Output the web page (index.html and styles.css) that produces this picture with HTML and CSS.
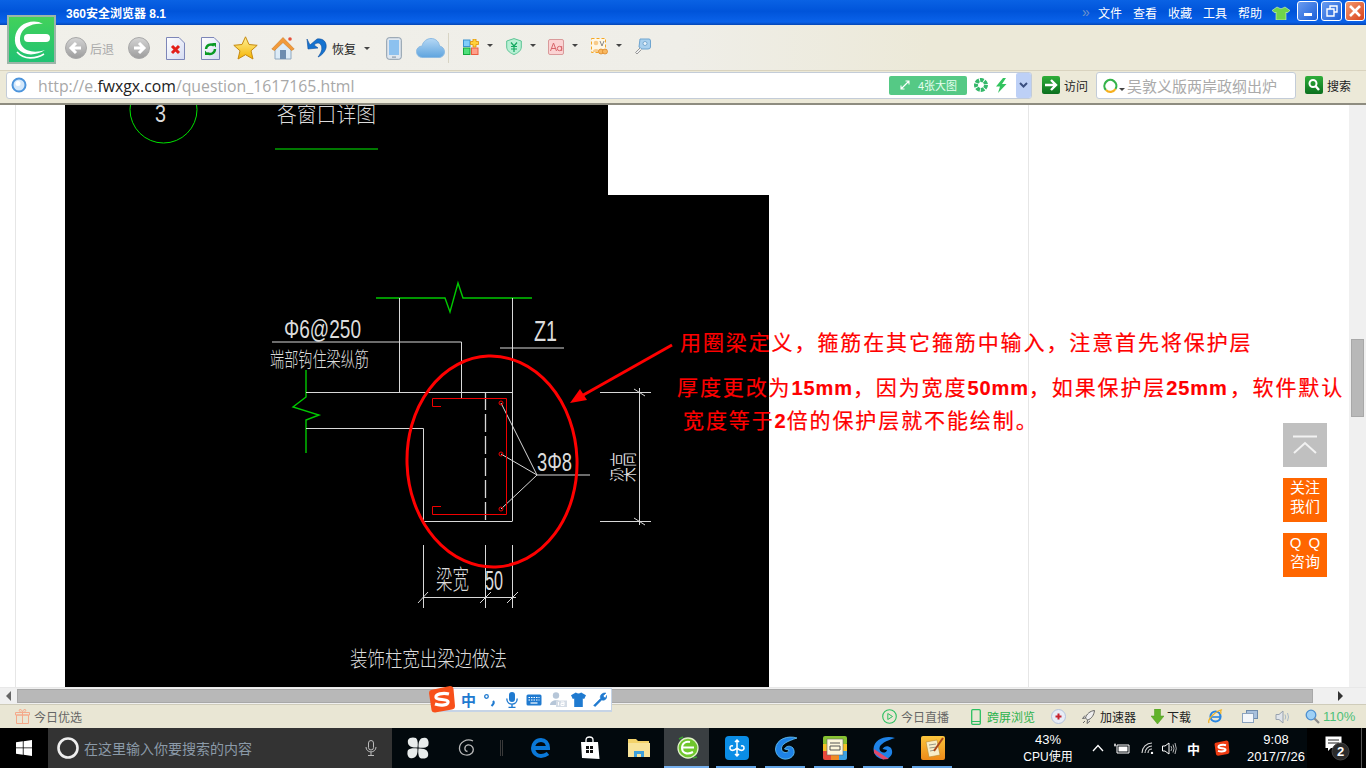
FILE: index.html
```html
<!DOCTYPE html>
<html lang="zh-CN">
<head>
<meta charset="utf-8">
<title>360安全浏览器 8.1</title>
<link rel="stylesheet" href="styles.css">
</head>
<body>
<svg class="defs" width="0" height="0">
  <defs>
    <linearGradient id="gBtn" x1="0" y1="0" x2="0" y2="1"><stop offset="0" stop-color="#d4d4d4"/><stop offset="1" stop-color="#9c9c9c"/></linearGradient>
    <linearGradient id="gStar" x1="0" y1="0" x2="0" y2="1"><stop offset="0" stop-color="#fff29a"/><stop offset="1" stop-color="#f5b400"/></linearGradient>
    <linearGradient id="gDoc" x1="0" y1="0" x2="1" y2="1"><stop offset="0" stop-color="#ffffff"/><stop offset="1" stop-color="#d5dcf2"/></linearGradient>
    <linearGradient id="gGreen" x1="0" y1="0" x2="0" y2="1"><stop offset="0" stop-color="#2fae3a"/><stop offset="1" stop-color="#0b6f1e"/></linearGradient>
    <linearGradient id="gLogo" x1="0" y1="0" x2="0" y2="1"><stop offset="0" stop-color="#43d25a"/><stop offset="1" stop-color="#1fc274"/></linearGradient>
    <linearGradient id="gCloud" x1="0" y1="0" x2="0" y2="1"><stop offset="0" stop-color="#b5d8f5"/><stop offset="1" stop-color="#5fa4de"/></linearGradient>
    <linearGradient id="gNote" x1="0" y1="0" x2="0" y2="1"><stop offset="0" stop-color="#fbc53c"/><stop offset="1" stop-color="#ee8a18"/></linearGradient>
  </defs>
</svg>

<header class="titlebar">
  <span class="title">360安全浏览器 8.1</span>
  <span class="more">»</span>
  <nav class="menu"><span>文件</span><span>查看</span><span>收藏</span><span>工具</span><span>帮助</span></nav>
  <svg class="shirt" width="18" height="14" viewBox="0 0 18 14"><path d="M5 1 L7 2 Q9 3.500 11 2 L13 1 L18 4.500 L15 7 L14 6 V14 H4 V6 L3 7 L0 4.500 Z" fill="#6fd44a" stroke="#d6f5c8" stroke-width=".6"/></svg>
  <span class="winbtn win-min"><i></i></span>
  <span class="winbtn win-max"><svg width="12" height="12" viewBox="0 0 12 12"><path d="M4 3.500 V1 H11 V7 H8.500 M1 4 H8 V11 H1 Z" fill="none" stroke="#fff" stroke-width="1.400"/></svg></span>
  <span class="winbtn win-close"><svg width="12" height="12" viewBox="0 0 12 12"><path d="M1 1 L11 11 M11 1 L1 11" stroke="#fff" stroke-width="2.600"/></svg></span>
</header>

<svg class="logo" width="49" height="49" viewBox="0 0 49 49">
  <rect x="1" y="1" width="47" height="47" fill="url(#gLogo)" stroke="#9cb5a8" stroke-width="2"/>
  <path d="M36 9 C30 5 20 6 14 11 C7 17 6 28 11 34 C17 41 29 41 38 35 C29 38 19 37 15 31 C11 25 13 16 20 12 C25 9 31 8 36 9 Z" fill="#fff"/>
  <path d="M21 23 H39" stroke="#fff" stroke-width="8" stroke-linecap="round"/>
  <path d="M10 37 C17 45 29 44 37 39" fill="none" stroke="#fff" stroke-width="1.600"/>
</svg>

<div class="toolbar">
  <svg class="t-back" width="22" height="22" viewBox="0 0 22 22"><circle cx="11" cy="11" r="10.500" fill="url(#gBtn)" stroke="#a8a8a8"/><path d="M16 11 H7 M11 6 L6 11 L11 16" fill="none" stroke="#fff" stroke-width="3"/></svg>
  <span class="t-label t-backlabel">后退</span>
  <svg class="t-fwd" width="22" height="22" viewBox="0 0 22 22"><circle cx="11" cy="11" r="10.500" fill="url(#gBtn)" stroke="#a8a8a8"/><path d="M6 11 H15 M11 6 L16 11 L11 16" fill="none" stroke="#fff" stroke-width="3"/></svg>
  <svg class="t-stop" width="19" height="23" viewBox="0 0 19 23"><path d="M.5 .5 H13 L18.500 6 V22.500 H.5 Z" fill="url(#gDoc)" stroke="#7d86b8"/><path d="M6 9 L13 16 M13 9 L6 16" stroke="#e3201b" stroke-width="3"/></svg>
  <svg class="t-reload" width="19" height="23" viewBox="0 0 19 23"><path d="M.5 .5 H13 L18.500 6 V22.500 H.5 Z" fill="url(#gDoc)" stroke="#7d86b8"/><path d="M5 12 A5 5 0 0 1 13 8.500 M14 12 A5 5 0 0 1 6 16" fill="none" stroke="#0a9a25" stroke-width="2.400"/><path d="M11 6 H15 V10.500 Z M8 18 H4 V13.500 Z" fill="#0a9a25"/></svg>
  <svg class="t-star" width="25" height="24" viewBox="0 0 25 24"><path d="M12.500 .8 L16 8.500 L24.200 9.300 L18 14.800 L20 23 L12.500 18.700 L5 23 L7 14.800 L.8 9.300 L9 8.500 Z" fill="url(#gStar)" stroke="#c68a10"/></svg>
  <svg class="t-home" width="24" height="24" viewBox="0 0 24 24"><path d="M4 12 V23 H20 V12 L12 5 Z" fill="#dcebf7" stroke="#8fa8c0"/><path d="M.8 13 L12 1.500 L23.200 13 L20.500 14.500 L12 6.500 L3.500 14.500 Z" fill="#f29a3a" stroke="#cc7a20" stroke-width=".6"/><rect x="9" y="14" width="6" height="9" fill="#6d8db0"/><circle cx="19" cy="3" r="1.800" fill="#e5503a"/></svg>
  <svg class="t-undo" width="22" height="22" viewBox="0 0 22 22"><path d="M4 9 L11 3 C18 2 21 7 20 12 C19 16 15 20 12 21 C15 17 17 13 15 9 C13 6 10 7 8 9 L12 12 L2 13 L1 3 Z" fill="#1573d0" stroke="#0d4e9c" stroke-width=".6"/></svg>
  <span class="t-label t-undolabel">恢复</span>
  <i class="caret t-undocaret"></i>
  <svg class="t-phone" width="16" height="23" viewBox="0 0 16 23"><rect x=".7" y=".7" width="14.600" height="21.600" rx="2.500" fill="#dfe7ef" stroke="#8b9bab"/><rect x="3" y="3" width="10" height="15" fill="#8cc1ef"/><rect x="6" y="19.500" width="4" height="1.200" fill="#8b9bab"/></svg>
  <svg class="t-cloud" width="29" height="20" viewBox="0 0 29 20"><path d="M7 19.500 C2 19.500 .5 16 .5 13.500 C.5 10 3.500 8 6 8.200 C7 3 11.500 .5 15 .5 C20 .5 23 4 23.500 8 C26.500 8.500 28.500 11 28.500 14 C28.500 17 26 19.500 23 19.500 Z" fill="url(#gCloud)" stroke="#8dbbe2"/></svg>
  <i class="t-sep"></i>
  <svg class="t-apps" width="16" height="16" viewBox="0 0 16 16"><rect x=".5" y="1" width="6.500" height="6.500" fill="#7fcdfb" stroke="#3d93d0"/><rect x=".5" y="9" width="6.500" height="6.500" fill="#4fe07a" stroke="#14a83d"/><rect x="8.500" y="9" width="6.500" height="6.500" fill="#ff9f8a" stroke="#ea5c40"/><path d="M10 0 H13 V2.500 H15.500 V5.500 H13 V8 H10 V5.500 H7.500 V2.500 H10 Z" fill="#ffd23c" stroke="#e08f00" stroke-width=".8"/></svg>
  <i class="caret t-c1"></i>
  <svg class="t-shield" width="16" height="17" viewBox="0 0 16 17"><path d="M8 .6 L15.300 3 V9 C15.300 13 11 15.500 8 16.500 C5 15.500 .7 13 .7 9 V3 Z" fill="#b8f0d4" stroke="#5cc494"/><path d="M5 4.500 L8 8 L11 4.500 M5 8.500 H11 M5 11 H11 M8 8 V14" fill="none" stroke="#13a860" stroke-width="1.200"/></svg>
  <i class="caret t-c2"></i>
  <svg class="t-font" width="16" height="16" viewBox="0 0 16 16"><rect x=".5" y=".5" width="15" height="15" rx="1.500" fill="#fbd3d3" stroke="#d99a9a"/><path d="M2.500 12 L5.500 4 L8.500 12 M3.500 9.500 H7.500" fill="none" stroke="#d8656a" stroke-width="1"/><circle cx="11.500" cy="9.500" r="2.200" fill="none" stroke="#d8656a"/><path d="M13.700 7 V12" stroke="#d8656a"/></svg>
  <i class="caret t-c3"></i>
  <svg class="t-shot" width="17" height="17" viewBox="0 0 17 17"><rect x=".5" y=".5" width="14" height="14" fill="#fff7e5" stroke="#f5a623" stroke-dasharray="3 2"/><circle cx="5" cy="5" r="2.300" fill="#f8cb8a"/><path d="M1.500 14 C2 10 8 10 9 14 Z" fill="#f8cb8a"/><path d="M9 3 L11 8 L13 3" fill="none" stroke="#888"/><circle cx="10" cy="13.500" r="2.500" fill="#f9b860" stroke="#d8801c" stroke-width=".7"/><circle cx="14" cy="13.500" r="2.500" fill="#f9b860" stroke="#d8801c" stroke-width=".7"/></svg>
  <i class="caret t-c4"></i>
  <svg class="t-key" width="17" height="17" viewBox="0 0 17 17"><path d="M6 1 H15 Q16.500 1 16.500 3 V9 Q16.500 11 14 11 H8 L5 9 Z" fill="#a9d0ee" stroke="#6fa5d0"/><circle cx="11" cy="5.500" r="2" fill="#eaf4fc" stroke="#5b93c0" stroke-width=".7"/><path d="M6 10 L1.500 14.500 L3 16 L7.500 11.500" fill="#eee" stroke="#999"/></svg>
</div>

<div class="addressrow">
  <div class="urlbox">
    <svg class="globe" width="16" height="16" viewBox="0 0 16 16"><circle cx="8" cy="8" r="6.500" fill="#d4e8fb" stroke="#4c94dc" stroke-width="2"/><circle cx="7" cy="6.500" r="2.500" fill="#fff"/></svg>
    <span class="url">http://e.<b>fwxgx.com</b>/question_1617165.html</span>
    <span class="bigpic">
      <svg width="10" height="10" viewBox="0 0 10 10"><path d="M1 9 L9 1 M5.500 1 H9 V4.500 M1 5.500 V9 H4.500" fill="none" stroke="#fff" stroke-width="1.100"/></svg>
      4张大图
    </span>
    <svg class="aperture" width="14" height="14" viewBox="0 0 14 14"><circle cx="7" cy="7" r="5" fill="none" stroke="#34b86a" stroke-width="4" stroke-dasharray="3.500 .9"/></svg>
    <svg class="bolt" width="12" height="15" viewBox="0 0 12 15"><path d="M8 0 L1 8.500 H5 L3 15 L11.500 6 H7 L11 0 Z" fill="#32c35e"/></svg>
    <span class="urldrop"><svg width="9" height="6" viewBox="0 0 9 6"><path d="M1 1 L4.500 4.500 L8 1" fill="none" stroke="#3a4f80" stroke-width="2"/></svg></span>
  </div>
  <svg class="go" width="18" height="18" viewBox="0 0 18 18"><rect width="18" height="18" rx="2" fill="url(#gGreen)"/><path d="M3 9 H13 M9 4 L14 9 L9 14" fill="none" stroke="#fff" stroke-width="2.400"/></svg>
  <span class="golabel">访问</span>
  <div class="searchbox">
    <svg class="so" width="15" height="15" viewBox="0 0 15 15"><path d="M3 12 A6 6 0 1 1 12.500 11" fill="none" stroke="#35b34a" stroke-width="2.200"/><path d="M3 12 A6 6 0 0 0 12.500 11" fill="none" stroke="#f6b01e" stroke-width="2.200"/></svg>
    <i class="caret socaret"></i>
    <span class="placeholder">吴敦义版两岸政纲出炉</span>
  </div>
  <svg class="searchgo" width="18" height="18" viewBox="0 0 18 18"><rect width="18" height="18" rx="2" fill="url(#gGreen)"/><circle cx="8" cy="7.500" r="3.500" fill="none" stroke="#fff" stroke-width="2"/><path d="M10.500 10 L14 14" stroke="#fff" stroke-width="2.400"/></svg>
  <span class="golabel searchlabel">搜索</span>
</div>

<main class="page">
  <div class="article">
    <svg class="drawing" width="704" height="583" viewBox="65 105 704 583">
      <path d="M65 105 H608 V195 H769 V688 H65 Z" fill="#000"/>
      <!-- green -->
      <g fill="none" stroke="#00c800" stroke-width="1">
        <circle cx="163.500" cy="109.500" r="33.500" stroke="#00e000"/>
        <path d="M275 149 H378" stroke="#00f000" stroke-width="1.200"/>
        <path d="M376 298 H445 L450 312 L458 283 L463 298 H532" stroke-width="1.400"/>
        <path d="M306 370 V397 L293 407 L319 415 L306 420 V453" stroke-width="1.400"/>
      </g>
      <!-- white section lines -->
      <g fill="none" stroke="#d8d8d8" stroke-width="1">
        <path d="M399.500 298 V392 M512.500 298 V521.500 M272 342 H461.500 V398 M500 348 H564"/>
        <path d="M306 392.500 H512 M306 428.500 H423.500 V521.500 H512"/>
        <path d="M485.500 392 V521" stroke-dasharray="18 4" stroke-width="1.300"/>
        <path d="M485.500 545 V608 M423.500 545 V608 M512.500 545 V608 M423 597.500 H516"/>
        <path d="M418 603 L428 592 M480 603 L491 592 M507 603 L518 592"/>
        <path d="M600 392.500 H651 M600 521.500 H651 M639.500 388 V525 M634 389 L645 396 M634 518 L645 525"/>
        <path d="M501 403 L537 475 M501 454 L537 475 M501 509 L537 475 M537 475 H590"/>
      </g>
      <!-- stirrup -->
      <g fill="none" stroke="#f00000" stroke-width="1">
        <path d="M441 406.500 H432.500 V398.500 H506.500 V514.500 H432.500 V506.500 H441"/>
        <circle cx="501" cy="403" r="2"/>
        <circle cx="501" cy="454" r="2"/>
        <circle cx="501" cy="509" r="2"/>
      </g>
      <!-- drawing labels -->
      <g class="cad">
        <text x="155" y="122" textLength="11" lengthAdjust="spacingAndGlyphs" font-size="24">3</text>
        <text x="277" y="122" textLength="99" lengthAdjust="spacingAndGlyphs" font-size="22">各窗口详图</text>
        <text x="284" y="338" textLength="77" lengthAdjust="spacingAndGlyphs" font-size="25">Φ6@250</text>
        <text x="270" y="367" textLength="99" lengthAdjust="spacingAndGlyphs" font-size="20">端部钩住梁纵筋</text>
        <text x="534" y="341" textLength="23" lengthAdjust="spacingAndGlyphs" font-size="29">Z1</text>
        <text x="537" y="471" textLength="35" lengthAdjust="spacingAndGlyphs" font-size="26">3Φ8</text>
        <text x="436" y="589" textLength="33" lengthAdjust="spacingAndGlyphs" font-size="26">梁宽</text>
        <text x="485" y="590" textLength="18" lengthAdjust="spacingAndGlyphs" font-size="27">50</text>
        <text x="350" y="666" textLength="157" lengthAdjust="spacingAndGlyphs" font-size="21">装饰柱宽出梁边做法</text>
        <text transform="translate(634 482) rotate(-90)" x="0" y="0" textLength="30" lengthAdjust="spacingAndGlyphs" font-size="28">梁高</text>
      </g>
      <!-- markup -->
      <ellipse cx="492" cy="461.500" rx="85" ry="105.500" fill="none" stroke="#f00" stroke-width="3" transform="rotate(-2 492 461)"/>
      <path d="M672 345 L578 398" stroke="#f00" stroke-width="3"/>
      <path d="M570 403 L580 389 L587 400 Z" fill="#f00"/>
    </svg>
    <div class="note">
      <p class="note-1">用圈梁定义，箍筋在其它箍筋中输入，注意首先将保护层</p>
      <p class="note-2">厚度更改为<b>15mm</b>，因为宽度<b>50mm</b>，如果保护层<b>25mm</b>，软件默认</p>
      <p class="note-3">宽度等于<b>2</b>倍的保护层就不能绘制。</p>
    </div>
  </div>
  <div class="vscroll"><i class="vthumb"></i></div>
  <div class="float">
    <span class="totop"><svg width="26" height="20" viewBox="0 0 26 20"><path d="M1 1.500 H25 M2 18 L13 8 L24 18" fill="none" stroke="#f2f2f2" stroke-width="2"/></svg></span>
    <span class="fbtn">关注<br>我们</span>
    <span class="fbtn"><span class="qq">Q Q</span><br>咨询</span>
  </div>
</main>

<div class="hscroll">
  <i class="arrow-l"></i>
  <i class="hthumb"></i>
  <i class="arrow-r"></i>
</div>

<div class="imebar">
  <svg class="ime-s" width="28" height="28" viewBox="0 0 28 28"><path d="M3 5 L22 1 Q25 1 25.500 4 L27 21 Q27 24 24 24.500 L7 27.500 Q4 27.500 3.500 25 L1 8 Q1 5.500 3 5 Z" fill="#f8501a"/><path d="M21 9 C15 7.500 7 9 8 12.500 C9 15.500 19 13.500 20 16.500 C21 20 13 21 7 19" fill="none" stroke="#fff" stroke-width="3.200"/></svg>
  <span class="ime-zh">中</span>
  <svg class="ime-punc" width="12" height="14" viewBox="0 0 12 14"><circle cx="2.500" cy="3.500" r="1.800" fill="none" stroke="#1f7ad0" stroke-width="1.300"/><path d="M9 8 Q11 10 7.500 13" fill="none" stroke="#1f7ad0" stroke-width="2.200"/></svg>
  <svg class="ime-mic" width="12" height="16" viewBox="0 0 12 16"><rect x="3" y="0" width="6" height="10" rx="3" fill="#1f7ad0"/><path d="M.8 6.500 C.8 14 11.200 14 11.200 6.500 M6 12 V15.500 M2.500 15.500 H9.500" fill="none" stroke="#1f7ad0" stroke-width="1.400"/></svg>
  <svg class="ime-kb" width="16" height="12" viewBox="0 0 16 12"><rect x=".5" y=".5" width="15" height="11" rx="1.500" fill="#1f7ad0"/><path d="M2.500 3.500 H13.500 M2.500 6 H13.500" stroke="#fff" stroke-width="1.200" stroke-dasharray="1.500 1"/><path d="M4.500 9 H11.500" stroke="#fff" stroke-width="1.200"/></svg>
  <svg class="ime-user" width="17" height="15" viewBox="0 0 17 15"><circle cx="6" cy="3.500" r="3.200" fill="#b6c6d8"/><path d="M0 13 C0 6.500 12 6.500 12 13 Z" fill="#b6c6d8"/><rect x="6" y="8.500" width="11" height="6.500" fill="#d4dce6"/><path d="M8.500 10 V13.500 M11 10 H14 V13.500 H11 V11.500 H14" fill="none" stroke="#fff" stroke-width="1"/></svg>
  <svg class="ime-shirt" width="15" height="15" viewBox="0 0 14 14"><path d="M4.500 .5 Q7 2.500 9.500 .5 L14 3 L12.300 6.500 L11 6 V14 H3 V6 L1.700 6.500 L0 3 Z" fill="#1f7ad0"/></svg>
  <svg class="ime-wrench" width="15" height="15" viewBox="0 0 14 14"><path d="M1.500 12.500 L8 6 C7 3 9.500 .5 13 1 L10.500 3.500 L11 5 L12.500 5.500 L14 3 C14 7 11.500 8 9 7.500 L3 13.500 Z" fill="#1f7ad0" stroke="#1f7ad0" stroke-width=".6"/></svg>
</div>

<div class="statusbar">
  <svg class="s-gift" width="15" height="15" viewBox="0 0 15 15"><path d="M1.500 6 H13.500 V14.500 H1.500 Z M.5 3.500 H14.500 V6 H.5 Z M7.500 3.500 V14.500 M7.500 3.500 C4 3.500 3.500 .5 5 .5 C6.500 .5 7.500 2 7.500 3.500 C7.500 2 8.500 .5 10 .5 C11.500 .5 11 3.500 7.500 3.500" fill="none" stroke="#f4a98a"/></svg>
  <span class="s-text s-today">今日优选</span>
  <svg class="s-play" width="15" height="15" viewBox="0 0 15 15"><circle cx="7.500" cy="7.500" r="6.800" fill="none" stroke="#2cbf62" stroke-width="1.100"/><path d="M5.800 4.500 L10.500 7.500 L5.800 10.500 Z" fill="none" stroke="#2cbf62"/></svg>
  <span class="s-text s-live">今日直播</span>
  <svg class="s-phone" width="10" height="16" viewBox="0 0 10 16"><rect x=".7" y=".7" width="8.600" height="14.600" rx="1" fill="none" stroke="#2cbf62" stroke-width="1.300"/><path d="M1 12.500 H9" stroke="#2cbf62"/></svg>
  <span class="s-text s-green s-cross">跨屏浏览</span>
  <svg class="s-plus" width="15" height="15" viewBox="0 0 15 15"><circle cx="7.500" cy="7.500" r="7" fill="#e7ecf6" stroke="#b4c2db"/><path d="M7.500 4.500 V10.500 M4.500 7.500 H10.500" stroke="#c8202c" stroke-width="2"/></svg>
  <svg class="s-rocket" width="13" height="14" viewBox="0 0 13 14"><path d="M12.500 .5 C8 1 4.500 4 3.500 8 L5.500 10 C9.500 9 12 5 12.500 .5 Z M3.500 8 L.5 8.500 L3 5.500 M5.500 10 L5 13.500 L8 11 M1 13 L3 11" fill="#eee" stroke="#666"/></svg>
  <span class="s-text s-dark s-boost">加速器</span>
  <svg class="s-down" width="13" height="15" viewBox="0 0 13 15"><path d="M3.500 0 H9.500 V7 H13 L6.500 15 L0 7 H3.500 Z" fill="#62b32a" stroke="#4a9520" stroke-width=".5"/></svg>
  <span class="s-text s-dark s-dl">下载</span>
  <svg class="s-ie" width="15" height="15" viewBox="0 0 15 15"><circle cx="7.500" cy="7.500" r="5" fill="none" stroke="#2a86e0" stroke-width="2.200"/><path d="M3 8 H12.500" stroke="#2a86e0" stroke-width="1.600"/><path d="M1 14 C-1 10 9 1 14 1 C11 0 14 3 12.500 5" fill="none" stroke="#f0b020" stroke-width="1.200"/></svg>
  <svg class="s-win" width="16" height="13" viewBox="0 0 16 13"><rect x="4.500" y=".5" width="11" height="8" fill="#a8c0dc" stroke="#6f8bab"/><rect x=".5" y="3.500" width="11" height="9" fill="#f4f7fb" stroke="#8ba3bf"/></svg>
  <svg class="s-vol" width="15" height="14" viewBox="0 0 15 14"><path d="M1 4.500 H4 L8 1 V13 L4 9.500 H1 Z" fill="#e0e4ea" stroke="#98a2ae"/><path d="M10 4.500 Q11.500 7 10 9.500 M12.500 3 Q14.500 7 12.500 11" fill="none" stroke="#a8b8c8"/></svg>
  <svg class="s-zoom" width="15" height="15" viewBox="0 0 15 15"><circle cx="6" cy="6" r="4.800" fill="#9ed0f5" stroke="#4c8fd0" stroke-width="1.300"/><path d="M9.500 9.500 L14 14" stroke="#8a8a8a" stroke-width="2.200"/></svg>
  <span class="s-pct">110%</span>
</div>

<footer class="taskbar">
  <div class="tk-start"><svg width="16" height="16" viewBox="0 0 16 16"><path d="M0 2.300 L6.800 1.300 V7.500 H0 Z M7.600 1.200 L16 0 V7.500 H7.600 Z M0 8.300 H6.800 V14.700 L0 13.700 Z M7.600 8.300 H16 V16 L7.600 14.800 Z" fill="#fff"/></svg></div>
  <div class="tk-search">
    <svg class="cortana" width="22" height="22" viewBox="0 0 22 22"><circle cx="11" cy="11" r="9.500" fill="none" stroke="#eee" stroke-width="2.600"/></svg>
    <span class="tk-hint">在这里输入你要搜索的内容</span>
    <svg class="tk-mic" width="12" height="16" viewBox="0 0 12 16"><rect x="3.500" y=".5" width="5" height="9.500" rx="2.500" fill="none" stroke="#bbb"/><path d="M1 7 C1 13.500 11 13.500 11 7 M6 12 V15.500 M3 15.500 H9" fill="none" stroke="#bbb"/></svg>
  </div>
  <div class="task"><svg width="22" height="22" viewBox="0 0 22 22"><g fill="#e8ecec"><path d="M10.500 10.500 C3 11 0 8 1 3 C2 0 7 0 9 1 C11 3 11 7 10.500 10.500 Z"/><path d="M11.500 10.500 C11 3 14 0 19 1 C22 2 22 7 21 9 C19 11 15 11 11.500 10.500 Z"/><path d="M11.500 11.500 C19 11 22 14 21 19 C20 22 15 22 13 21 C11 19 11 15 11.500 11.500 Z"/><path d="M10.500 11.500 C11 19 8 22 3 21 C0 20 0 15 1 13 C3 11 7 11 10.500 11.500 Z"/></g></svg></div>
  <div class="task"><svg width="20" height="20" viewBox="0 0 20 20"><path d="M16 3 C10 0 2 4 2.500 11 C3 17 11 19 15 15 C18 11 15 6 10.500 7 C7 8 7 13 10.500 13.500" fill="none" stroke="#b8b8b8" stroke-width="1.300"/></svg></div>
  <div class="tk-divider"></div>
  <div class="task"><svg width="20" height="20" viewBox="0 0 20 20"><path d="M2 10 H17 C17 5 14 2 10 2 C5 2 2 6 2 10 C2 15 6 18 10 18 C13 18 15 17 17 15.500" fill="none" stroke="#0a78d8" stroke-width="4"/></svg></div>
  <div class="task"><svg width="20" height="24" viewBox="0 0 20 24"><path d="M1 6 H18 L19.500 23 L2 22 Z" fill="#fff"/><path d="M6 7 V4 Q6 1 9.500 1 Q13 1 13 4 V7" fill="none" stroke="#fff" stroke-width="1.300"/><path d="M6 10 H9 V13 H6 Z M10 10 H13 V13 H10 Z M6 14 H9 V17 H6 Z M10 14 H13 V17 H10 Z" fill="#111"/></svg></div>
  <div class="task"><svg width="22" height="20" viewBox="0 0 22 20"><path d="M0 1 H8 L10 3 H21 V19 H0 Z" fill="#f3d26a"/><path d="M0 5 H22 V19 H0 Z" fill="#f8e39a"/><path d="M6 19 V13 H16 V19 H13 V16 H9 V19 Z" fill="#3ea0dc"/></svg></div>
  <div class="task on"><svg width="22" height="24" viewBox="0 0 22 24"><circle cx="11" cy="12" r="10" fill="#6fc62c" stroke="#dff2c8" stroke-width="1.300"/><path d="M17 11.500 H6 M5 12 C5 7 9 5 13 6 M5 12 C5 17 10 19 16 16" fill="none" stroke="#fff" stroke-width="2"/><path d="M2 3 L6 1 M16 22 L20 21" stroke="#3aa030" stroke-width="1.400"/></svg></div>
  <div class="task"><svg width="24" height="24" viewBox="0 0 24 24"><rect width="24" height="24" rx="4" fill="#0a8de6"/><path d="M12 4 V20 M8 10 C5 9 4 12 6 14 C8 15 10 14 12 12 C14 14 16 15 18 14 C20 12 19 9 16 10 M10 6 L12 4 L14 6 M10 18 L12 20 L14 18" fill="none" stroke="#fff" stroke-width="1.500"/></svg></div>
  <div class="task"><svg width="24" height="24" viewBox="0 0 24 24"><path d="M23 2 C14 -1 2 3 1.500 13 C1.500 20 8 24 13 23 C19 22 22 17 19 12 C16 9 12 10 10.500 13 L15 14 C14 18 8 17 7.500 13 C7 8 14 5 23 2 Z" fill="#1e82e6" stroke="#68c8f8" stroke-width=".8"/></svg></div>
  <div class="task"><svg width="24" height="24" viewBox="0 0 24 24"><rect width="24" height="9" rx="2" fill="#86c232"/><rect y="8" width="24" height="8" fill="#f5c226"/><path d="M0 15 H8 V24 H2 Q0 24 0 22 Z" fill="#e8483a"/><path d="M8 15 H16 V24 H8 Z" fill="#f08a24"/><path d="M16 15 H24 V22 Q24 24 22 24 H16 Z" fill="#3ca0e0"/><rect x="4" y="3" width="16" height="16" fill="#fdf6da" stroke="#666" stroke-width=".6"/><path d="M7 7 H17 M7 10 H17 V14 H7 Z" fill="none" stroke="#555"/></svg></div>
  <div class="task"><svg width="24" height="24" viewBox="0 0 24 24"><path d="M23 2 C14 -1 2 3 1.500 13 C1.500 20 8 24 13 23 C19 22 22 17 19 12 C16 9 12 10 10.500 13 L15 14 C14 18 8 17 7.500 13 C7 8 14 5 23 2 Z" fill="#1e82e6"/><path d="M2 13 L17 23 L11 23.500 L2 17 Z" fill="#e0486a"/></svg></div>
  <div class="task"><svg width="24" height="24" viewBox="0 0 24 24"><rect width="24" height="24" rx="2" fill="url(#gNote)"/><path d="M5 6 L16 4 L19 19 L8 21 Z" fill="#f7edc8" stroke="#b88a30" stroke-width=".6"/><path d="M8 9 L15 8 M8.500 12 L16 11 M9 15 L14 14" stroke="#998" /><path d="M22 2 L13 15" stroke="#a8461a" stroke-width="2"/></svg></div>
  <div class="tk-cpu"><span>43%</span><span class="tk-cpulabel">CPU使用</span></div>
  <svg class="tr-chev" width="12" height="8" viewBox="0 0 12 8"><path d="M1 7 L6 1.500 L11 7" fill="none" stroke="#fff" stroke-width="1.300"/></svg>
  <svg class="tr-batt" width="16" height="11" viewBox="0 0 16 11"><path d="M0 2 H2 M1 .5 V3.500" stroke="#fff"/><path d="M3 2 H15 V10 H3 Z" fill="none" stroke="#fff"/><rect x="4.500" y="3.500" width="9" height="5" fill="#fff"/></svg>
  <svg class="tr-wifi" width="13" height="12" viewBox="0 0 13 12"><path d="M1 11 A10 10 0 0 1 11 1 M4 11 A7 7 0 0 1 11 4 M7 11 A4 4 0 0 1 11 7" fill="none" stroke="#d8d8d8" stroke-width="1.100"/><circle cx="11" cy="11" r="1.200" fill="#fff"/></svg>
  <svg class="tr-vol" width="15" height="13" viewBox="0 0 15 13"><path d="M.5 4 H3 L7 1 V12 L3 9 H.5 Z" fill="none" stroke="#fff"/><path d="M9 4 Q10.500 6.500 9 9 M11 2.500 Q13 6.500 11 10.500 M13 1 Q15.500 6.500 13 12" fill="none" stroke="#ddd" stroke-width=".8"/></svg>
  <span class="tr-zh">中</span>
  <svg class="tr-s" width="16" height="16" viewBox="0 0 28 28"><path d="M3 5 L22 1 Q25 1 25.500 4 L27 21 Q27 24 24 24.500 L7 27.500 Q4 27.500 3.500 25 L1 8 Q1 5.500 3 5 Z" fill="#ee3b12"/><path d="M21 9 C15 7.500 7 9 8 12.500 C9 15.500 19 13.500 20 16.500 C21 20 13 21 7 19" fill="none" stroke="#fff" stroke-width="3.600"/></svg>
  <div class="tk-clock"><span>9:08</span><span>2017/7/26</span></div>
  <div class="tk-notify">
    <svg width="25" height="25" viewBox="0 0 25 25"><path d="M.5 .5 H16.500 V12 H6 L3 15 V12 H.5 Z" fill="#fff"/><path d="M3 4 H14 M3 7 H14" stroke="#222"/><circle cx="15.500" cy="15.500" r="8.500" fill="#2b2b2b" stroke="#444"/><text x="15.500" y="20" text-anchor="middle" font-size="13" font-weight="700" fill="#fff">2</text></svg>
  </div>
</footer>
</body>
</html>
```

FILE: styles.css
```css
html, body {padding: 0; margin: 0}
body {
  width: 1366px;
  height: 768px;
  overflow: hidden;
  position: relative;
  display: flex;
  flex-direction: column;
  font: 12px "Liberation Sans", "Noto Sans CJK SC", sans-serif;
  background: #fff;
}
.defs {position: absolute}
svg {display: block; flex: none}
i {display: block; flex: none}

/* title bar */
.titlebar {
  height: 25px;
  flex: none;
  display: flex;
  align-items: center;
  color: #fff;
  background: linear-gradient(#0a62e4 0, #0054da 45%, #0a62ea 88%, #0546b4 100%);
}
.title {margin-left: 66px; font-weight: bold; font-size: 12px; width: 1016px}
.more {color: #6f93c9; font-size: 14px; width: 16px; margin-top: -2px}
.menu {display: flex; gap: 11px; font-size: 12px}
.shirt {margin-left: 10px; margin-right: 7px}
.winbtn {
  width: 21px;
  height: 20px;
  box-sizing: border-box;
  margin-right: 3px;
  margin-top: -3px;
  display: flex;
  align-items: center;
  justify-content: center;
  border: 1px solid #fff;
  border-radius: 3px;
  background: linear-gradient(135deg, #6a9cf0, #1a5fd8);
}
.win-min i {width: 8px; height: 3px; background: #fff; margin-top: 7px}
.win-close {background: linear-gradient(135deg, #f29a70, #d9421c); margin-right: 0; width: 20px}

/* logo sits over both bars */
.logo {position: absolute; left: 7px; top: 15px}

/* toolbar */
.toolbar {
  height: 46px;
  flex: none;
  box-sizing: border-box;
  display: flex;
  align-items: center;
  background: linear-gradient(90deg, #f1f0ea 0, #efeee8 50%, #ece9d8 68%);
  border-bottom: 1px solid #d9d3bf;
  padding-top: 1px;
}
.t-label {color: #222; font-size: 12px}
.t-back {margin-left: 65px}
.t-backlabel {margin-left: 3px; color: #aaa}
.t-fwd {margin-left: 14px}
.t-stop {margin-left: 16px}
.t-reload {margin-left: 16px}
.t-star {margin-left: 13px}
.t-home {margin-left: 13px}
.t-undo {margin-left: 11px; margin-top: -3px}
.t-undolabel {margin-left: 4px}
.t-undocaret {margin-left: 8px}
.t-phone {margin-left: 16px}
.t-cloud {margin-left: 14px}
.t-sep {width: 1px; height: 30px; background: #d8d4c4; margin-left: 3px}
.t-apps {margin-left: 14px; margin-top: -3px}
.t-c1 {margin-left: 8px; margin-top: -5px}
.t-shield {margin-left: 13px; margin-top: -3px}
.t-c2 {margin-left: 8px; margin-top: -5px}
.t-font {margin-left: 12px; margin-top: -3px}
.t-c3 {margin-left: 8px; margin-top: -5px}
.t-shot {margin-left: 13px; margin-top: -3px}
.t-c4 {margin-left: 8px; margin-top: -5px}
.t-key {margin-left: 12px; margin-top: -3px}
.caret {
  width: 0;
  height: 0;
  border: 3px solid transparent;
  border-top: 3px solid #444;
  border-bottom: 0;
}

/* address row */
.addressrow {
  height: 34px;
  flex: none;
  box-sizing: border-box;
  display: flex;
  align-items: center;
  padding-bottom: 4px;
  background: #ece9d8;
  border-bottom: 2px solid #8e8c80;
}
.urlbox {
  width: 1026px;
  height: 27px;
  margin-left: 6px;
  box-sizing: border-box;
  display: flex;
  align-items: center;
  background: #fff;
  border: 1px solid #c3ccd8;
  border-radius: 3px;
}
.globe {margin-left: 4px}
.url {
  margin-left: 11px;
  margin-top: 1px;
  width: 842px;
  font: 15.800px "Open Sans", sans-serif;
  color: #a8a8a8;
  white-space: nowrap;
}
.url b {font-weight: normal; color: #222}
.bigpic {
  width: 78px;
  height: 19px;
  margin-left: 9px;
  display: flex;
  align-items: center;
  gap: 8px;
  padding-left: 11px;
  box-sizing: border-box;
  background: #55c985;
  border-radius: 2px;
  color: #e8fff0;
  font-size: 11px;
}
.aperture {margin-left: 7px}
.bolt {margin-left: 7px}
.urldrop {
  width: 15px;
  height: 25px;
  margin-left: 9px;
  display: flex;
  align-items: center;
  justify-content: center;
  background: #bdd0f6;
  border-radius: 2px;
}
.go {margin-left: 10px}
.golabel {margin-left: 4px; color: #222; font-size: 12px}
.searchbox {
  width: 200px;
  height: 27px;
  margin-left: 8px;
  box-sizing: border-box;
  display: flex;
  align-items: center;
  background: #fff;
  border: 1px solid #c3ccd8;
  border-radius: 3px;
}
.so {margin-left: 6px}
.socaret {margin-left: 1px; margin-top: 9px}
.placeholder {margin-left: 2px; color: #aaa; font-size: 15px; white-space: nowrap}
.searchgo {margin-left: 9px}

/* page */
.page {
  flex: 1;
  min-height: 0;
  display: flex;
  position: relative;
  overflow: hidden;
}
.article {
  width: 1015px;
  margin-left: 15px;
  padding-left: 49px;
  box-sizing: border-box;
  border-left: 1px solid #e6e6e6;
  border-right: 1px solid #e6e6e6;
}
.cad text {fill: #dcdcdc; font-weight: 300}
.note {
  position: absolute;
  left: 680px;
  top: 0;
  color: #f00;
  font-size: 21px;
  letter-spacing: 1.900px;
  -webkit-text-stroke: .2px #f00;
  white-space: nowrap;
}
.note p {margin: 0; line-height: 28px}
.note b {font-family: "Liberation Sans", sans-serif; font-size: 20px; letter-spacing: .9px}
.note .note-1 {margin-top: 224px}
.note .note-2 {margin-top: 17px; margin-left: -3px}
.note .note-3 {margin-top: 5px; margin-left: 3px}
.note-2 b:last-child {margin-right: 2px}
.vscroll {
  width: 17px;
  margin-left: 320px;
  flex: none;
  background: #f0f0f0;
  position: relative;
}
.vthumb {
  position: absolute;
  left: 2px;
  top: 234px;
  width: 13px;
  height: 78px;
  box-sizing: border-box;
  background: #b8b8b8;
  border: 1px solid #a8a8a8;
}
.float {
  position: absolute;
  left: 1283px;
  top: 318px;
  display: flex;
  flex-direction: column;
  gap: 11px;
}
.totop, .fbtn {
  width: 44px;
  height: 44px;
  display: flex;
  align-items: center;
  justify-content: center;
}
.totop {background: #c0c0c0}
.fbtn {
  display: block;
  box-sizing: border-box;
  padding-top: 1px;
  background: #ff6600;
  color: #fff;
  font-size: 15px;
  line-height: 18.500px;
  text-align: center;
}
.qq {word-spacing: 3px}

/* bottom scrollbar */
.hscroll {
  height: 17px;
  flex: none;
  display: flex;
  align-items: center;
  box-sizing: border-box;
  background: #f0f0f0;
  border-top: 1px solid #e8e8e8;
}
.arrow-l {
  margin-left: 6px;
  border: 5px solid transparent;
  border-right: 5px solid #666;
  border-left: 0;
}
.hthumb {
  width: 1296px;
  height: 14px;
  margin-left: 6px;
  box-sizing: border-box;
  background: #b8b8b8;
  border: 1px solid #a8a8a8;
}
.arrow-r {
  margin-left: 25px;
  border: 5px solid transparent;
  border-left: 5px solid #333;
  border-right: 0;
}

/* input method bar floats over the scrollbar */
.imebar {
  position: absolute;
  left: 440px;
  top: 688px;
  width: 172px;
  height: 24px;
  box-sizing: border-box;
  display: flex;
  align-items: center;
  background: #fff;
  border: 1px solid #c6d4e6;
  border-bottom-width: 2px;
}
.ime-s {position: absolute; left: -13px; top: -4px}
.ime-zh {margin-left: 20px; color: #1f7ad0; font-size: 15px; font-weight: bold}
.ime-punc {margin-left: 8px}
.ime-mic {margin-left: 10px}
.ime-kb {margin-left: 8px}
.ime-user {margin-left: 8px}
.ime-shirt {margin-left: 4px}
.ime-wrench {margin-left: 6px}

/* status bar */
.statusbar {
  height: 24px;
  flex: none;
  box-sizing: border-box;
  display: flex;
  align-items: center;
  background: #e9e6d4;
  border-top: 1px solid #cfccba;
}
.s-text {font-size: 12px; color: #666; white-space: nowrap}
.s-dark {color: #222}
.s-green {color: #2bb24c}
.s-gift {margin-left: 15px}
.s-today {margin-left: 4px}
.s-play {margin-left: 800px}
.s-live {margin-left: 4px}
.s-phone {margin-left: 22px}
.s-cross {margin-left: 6px}
.s-plus {margin-left: 16px}
.s-rocket {margin-left: 16px}
.s-boost {margin-left: 5px}
.s-down {margin-left: 15px}
.s-dl {margin-left: 3px}
.s-ie {margin-left: 17px}
.s-win {margin-left: 19px}
.s-vol {margin-left: 17px}
.s-zoom {margin-left: 15px}
.s-pct {margin-left: 3px; color: #4cc078; font-size: 13px}

/* task bar */
.taskbar {
  height: 40px;
  flex: none;
  display: flex;
  align-items: center;
  color: #fff;
  background: #02090d;
}
.tk-start {
  width: 48px;
  height: 40px;
  display: flex;
  align-items: center;
  justify-content: center;
  background: #000;
}
.tk-search {
  width: 344px;
  height: 40px;
  margin-right: 1px;
  display: flex;
  align-items: center;
  background: #333;
}
.cortana {margin-left: 9px}
.tk-hint {margin-left: 5px; width: 281px; color: #8b9aa8; font-size: 14px; white-space: nowrap}
.task {
  width: 49px;
  height: 40px;
  flex: none;
  display: flex;
  align-items: center;
  justify-content: center;
  position: relative;
}
.task::after {
  content: " ";
  position: absolute;
  left: 4px;
  right: 5px;
  bottom: 0;
  height: 2px;
}
.task:nth-child(n+9)::after {background: #62a4e6}
.task.on {background: linear-gradient(#3a3f42, #3a3f42) 1px 0 / 45px 100% no-repeat}
.task.on::after {background: #76b0ee; left: 1px; right: 3px}
.tk-divider {
  width: 25px;
  height: 16px;
  flex: none;
  box-sizing: border-box;
  padding-left: 9px;
  background: linear-gradient(90deg, #3a3a3a 1px, transparent 1px, transparent 2px, #3a3a3a 2px, #3a3a3a 3px, transparent 3px) 9px 0 no-repeat;
}
.tk-cpu {
  margin-left: 61px;
  width: 60px;
  display: flex;
  flex-direction: column;
  align-items: center;
  gap: 1px;
  font-size: 13px;
  line-height: 16px;
}
.tk-cpulabel {font-size: 12px}
.tr-chev {margin-left: 14px}
.tr-batt {margin-left: 10px}
.tr-wifi {margin-left: 11px}
.tr-vol {margin-left: 8px}
.tr-zh {margin-left: 10px; font-size: 13px; font-weight: bold; width: 13px}
.tr-s {margin-left: 14px}
.tk-clock {
  margin-left: 15px;
  width: 62px;
  display: flex;
  flex-direction: column;
  align-items: center;
  gap: 1px;
  font-size: 13px;
  line-height: 16px;
}
.tk-notify {
  padding-left: 18px;
  height: 40px;
  flex: 1;
  display: flex;
  align-items: center;
  background: linear-gradient(#555, #555) 54px 0 / 1px 100% no-repeat, #000;
}
```
